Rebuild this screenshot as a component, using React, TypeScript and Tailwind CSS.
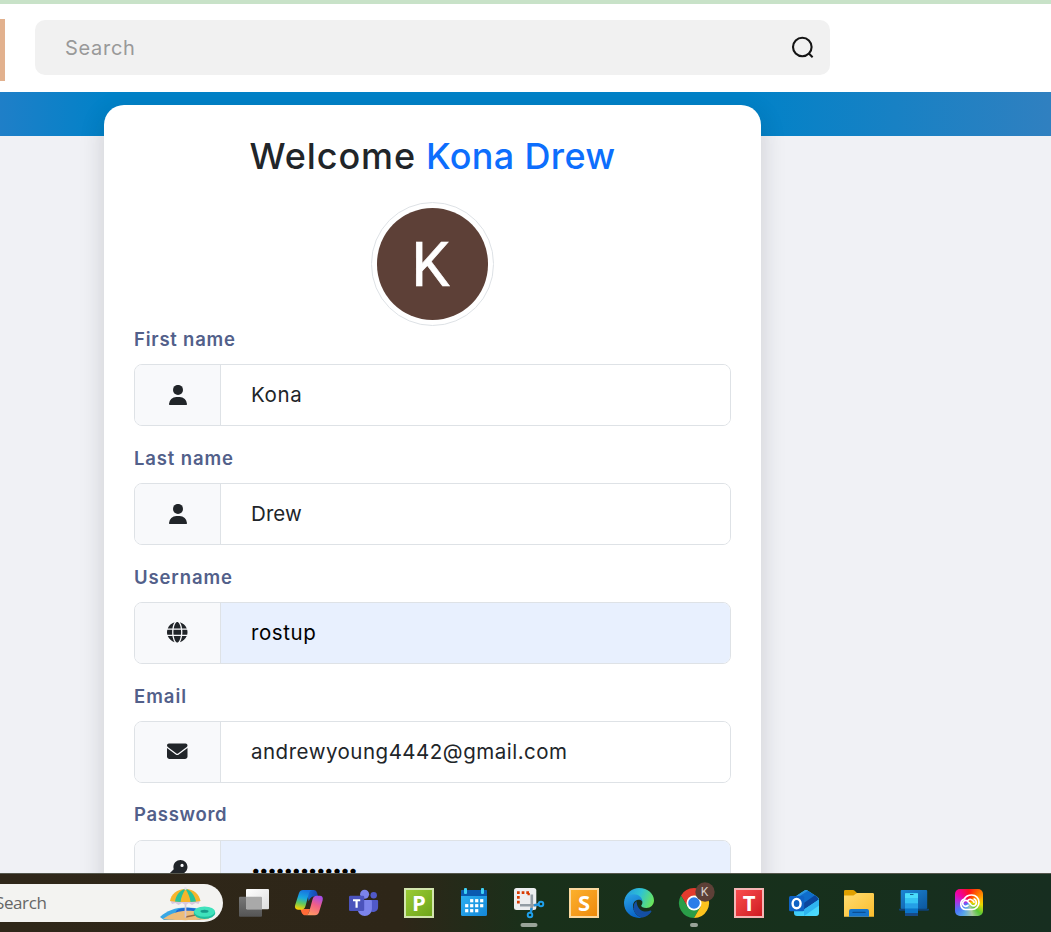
import type { ReactNode } from 'react';
import { FaGlobe, FaEnvelope, FaKey } from 'react-icons/fa6';

type FieldProps = {
  label: string;
  labelClass: string;
  value: string;
  valueClass: string;
  icon: ReactNode;
  filled?: boolean;
};

function Field({ label, labelClass, value, valueClass, icon, filled }: FieldProps) {
  return (
    <div className="flex h-[119px] shrink-0 flex-col">
      <div className={`flex h-[38px] items-start text-[18.500px] leading-[27px] font-semibold text-[#52608a] ${labelClass}`}>
        <span className="whitespace-nowrap">{label}</span>
      </div>
      <div className="flex h-[62px] overflow-hidden rounded-[8px] border border-[#dee2e6]">
        <div className="flex w-[86px] items-center justify-center border-r border-[#dee2e6] bg-[#f8f9fb] pb-px text-[20.500px] text-[#212529]">
          {icon}
        </div>
        <div className={`flex flex-1 items-center pl-[30px] whitespace-nowrap ${filled ? 'bg-[#e8f0fe] text-black' : 'bg-white text-[#212529]'} ${valueClass}`}>
          {value}
        </div>
      </div>
    </div>
  );
}

function UserIcon() {
  return (
    <svg viewBox="0 0 20 20" className="size-[20px]" fill="currentColor">
      <circle cx="10" cy="4.900" r="5" />
      <path d="M1 19A7.400 7.400 0 0 1 8.400 11.900h3.200A7.400 7.400 0 0 1 19 19q0 1.200-1.200 1.200H2.200Q1 20.200 1 19z" />
    </svg>
  );
}

function AppCell({ children, indicator }: { children: ReactNode; indicator?: string }) {
  return (
    <div className="relative flex h-full w-[55px] shrink-0 items-center justify-center">
      {children}
      {indicator && <div className={`absolute bottom-[5px] left-1/2 h-[4px] -translate-x-1/2 rounded-full bg-[#99a398] ${indicator}`} />}
    </div>
  );
}

function LetterTile({ letter, tone }: { letter: string; tone: string }) {
  return (
    <div className={`flex size-[30px] items-center justify-center border-2 bg-linear-to-br font-['Open_Sans',sans-serif] text-[22px] leading-none font-bold text-white ${tone}`}>
      <span className="-translate-y-px">{letter}</span>
    </div>
  );
}

const svg = 'size-[30px] overflow-visible';

function TaskViewIcon() {
  return (
    <svg viewBox="0 0 30 30" className={svg}>
      <defs>
        <linearGradient id="tv1" x1="0" y1="0" x2="1" y2="1"><stop stopColor="#fff" /><stop offset="1" stopColor="#dedede" /></linearGradient>
        <linearGradient id="tv2" x1="0" y1="0" x2="0" y2="1"><stop stopColor="#777" /><stop offset="1" stopColor="#555" /></linearGradient>
      </defs>
      <rect x="0" y="8.7" width="23" height="20" rx="1" fill="url(#tv2)" />
      <rect x="7" y="1" width="23" height="20.3" rx="1" fill="url(#tv1)" />
      <path d="M7 8.7h15a1 1 0 0 1 1 1v11.6H8a1 1 0 0 1-1-1z" fill="#a9a9a9" />
    </svg>
  );
}

function CopilotIcon() {
  return (
    <svg viewBox="0 0 30 30" className={svg}>
      <defs>
        <linearGradient id="cp1" x1="0.5" y1="0" x2="0.3" y2="1"><stop stopColor="#1873e0" /><stop offset=".4" stopColor="#19a8df" /><stop offset=".68" stopColor="#63c85c" /><stop offset="1" stopColor="#ffd000" /></linearGradient>
        <linearGradient id="cp2" x1="0.7" y1="0" x2="0.3" y2="1"><stop stopColor="#a64de8" /><stop offset=".45" stopColor="#f25f86" /><stop offset="1" stopColor="#ff9b62" /></linearGradient>
        <linearGradient id="cp3" x1="0" y1="0" x2="1" y2="0"><stop stopColor="#1570d8" /><stop offset="1" stopColor="#1a42ad" /></linearGradient>
      </defs>
      <path d="M13 2h6.500c2 0 3 1 3.600 3l1 3.500h-4c-3 0-4.500 2-5.500 5z" fill="url(#cp3)" />
      <path d="M6.500 21h9.500l-1 3c-.6 2-1.500 3.300-3.500 3.300C8.500 27.300 7.500 25 6.500 21z" fill="#ff6a37" />
      <path d="M9 2h9.500c-2 0-3 1.600-3.600 3.500L11.500 18c-.8 2.500-2 3.700-4 3.700H4C1.500 21.700.4 19.500 1.200 17L5 5c.7-2 2-3 4-3z" fill="url(#cp1)" />
      <path d="M21 27.300h-9.500c2 0 3-1.400 3.600-3.300L18.500 11.500c.8-2.500 2-3.700 4-3.700h3.200c2.600 0 3.700 2 2.900 4.700L25 24.300c-.7 2-2 3-4 3z" fill="url(#cp2)" />
    </svg>
  );
}

function TeamsIcon() {
  return (
    <svg viewBox="0 0 30 30" className={svg}>
      <circle cx="24.700" cy="7.300" r="3.200" fill="#5059c9" />
      <path d="M20 12h8.200a.9.900 0 0 1 .9.900V19a5 5 0 0 1-9 3z" fill="#5059c9" />
      <circle cx="15.600" cy="6.300" r="4.500" fill="#7b83eb" />
      <path d="M8.700 12h13.200a1 1 0 0 1 1 1v8a7.100 7.100 0 0 1-14.200 0z" fill="#7b83eb" />
      <rect x="0" y="7.700" width="15.200" height="15.300" rx="1.300" fill="#4b53bc" />
      <path d="M4 11.300h7.200v1.900H8.700v6.500H6.500v-6.500H4z" fill="#fff" />
    </svg>
  );
}

function CalendarIcon() {
  const dots = [[12.700, 12.700], [17.700, 12.700], [22.700, 12.700], [7.700, 17.700], [12.700, 17.700], [17.700, 17.700], [22.700, 17.700], [7.700, 22.700], [12.700, 22.700], [17.700, 22.700]];
  return (
    <svg viewBox="0 0 30 30" className={svg}>
      <defs><linearGradient id="cal" x1="0" y1="0" x2="1" y2="1"><stop stopColor="#2fb4f4" /><stop offset="1" stopColor="#1487d8" /></linearGradient></defs>
      <rect x="2" y="2" width="26" height="26" rx="1.500" fill="url(#cal)" />
      <path d="M2 8V3.500A1.500 1.500 0 0 1 3.500 2h23A1.500 1.500 0 0 1 28 3.500V8z" fill="#0a5ab0" />
      <rect x="5" y="0" width="3" height="6" rx="1" fill="#3fd0f6" />
      <rect x="22" y="0" width="3" height="6" rx="1" fill="#3fd0f6" />
      {dots.map(([x, y]) => <rect key={`${x}-${y}`} x={x - 1.600} y={y - 1.600} width="3.200" height="3.200" fill="#fff" />)}
    </svg>
  );
}

function SnippingIcon() {
  return (
    <svg viewBox="0 0 30 30" className={svg}>
      <rect width="22.300" height="22" rx="2.500" fill="#eceef0" />
      <path d="M3 3.200h2.700v2.700H3zM7.700 3.200h2.700v2.700H7.700zM12.300 3.200H15v2.700h-2.700zM3 8h2.700v2.700H3zM3 12.800h2.700v2.700H3zM13.500 5h2.300v2.300h-2.300z" fill="#d83b01" />
      <path d="M17.800 6.500V18l-.6 5M6 17.300h13.500l5-.7" fill="none" stroke="#929ca4" strokeWidth="2.600" />
      <path d="m20 17.300 5-1M17.600 20l-.9 5" stroke="#1d8fdb" strokeWidth="2.200" />
      <circle cx="27" cy="16" r="2.300" fill="none" stroke="#1fa0ec" strokeWidth="1.900" />
      <circle cx="16" cy="27" r="2.300" fill="none" stroke="#1fa0ec" strokeWidth="1.900" />
    </svg>
  );
}

function EdgeIcon() {
  return (
    <svg viewBox="0 0 30 30" className={svg}>
      <defs>
        <linearGradient id="ed1" x1="0" y1=".3" x2="1" y2=".6"><stop stopColor="#2499e0" /><stop offset=".5" stopColor="#2fc3d3" /><stop offset="1" stopColor="#6be55a" /></linearGradient>
        <linearGradient id="ed2" x1="0" y1="0" x2=".3" y2="1"><stop stopColor="#2aa5e5" /><stop offset="1" stopColor="#0a66c9" /></linearGradient>
      </defs>
      <path d="M.4 12C2 5 8 0 15 0c9 0 15 6 15 12.500 0 4.500-3.500 7.500-7.500 7.500-3.500 0-5.300-1.300-5.300-2.200 0-.8 1.200-1.200 1.200-3.400C18.400 10.500 14.500 8 10 8 5.500 8 2 10 .4 12z" fill="url(#ed1)" />
      <path d="M0 15c0-5.500 4.500-8.800 9.800-8.800 5 0 8.600 3.500 8.600 7.400-1-1.600-2.600-2.200-4.400-1.800C9.500 12.500 8 17 9.500 21.500 11 26 14.500 29 18.500 29.600 8.500 31.500 0 24.500 0 15z" fill="url(#ed2)" />
      <path d="M12.500 13c-3.600 3-3.800 8.200-.8 11.500 3.800 4.200 11 4 15.400-.6.700-.7.100-1.700-.8-1.300-5.800 2.600-13.300.1-13.800-9.600z" fill="#144fa3" />
      <path d="M9.200 20.500c1.300 5 5 8.700 9.500 9 3.600-.7 6.600-2.800 8.700-6-5 3.800-14.500 3.500-15.800-4.800z" fill="#144fa3" />
    </svg>
  );
}

function ChromeIcon() {
  return (
    <svg viewBox="0 0 30 30" className={svg}>
      <path d="M15 7.500H28A15 15 0 0 0 2 7.500l6.500 11.300z" fill="#e33b2e" />
      <path d="M8.500 18.800 2 7.500A15 15 0 0 0 15 30l6.500-11.200z" fill="#2a9d48" />
      <path d="M21.500 18.800 15 30A15 15 0 0 0 28 7.500H15z" fill="#fcc31e" />
      <circle cx="15" cy="15" r="7.500" fill="#fff" />
      <circle cx="15" cy="15" r="5.800" fill="#2b7de9" />
      <circle cx="26" cy="4" r="9.700" fill="#5d4037" />
      <text x="25.600" y="8.300" textAnchor="middle" fontSize="12" fontFamily="Roboto, sans-serif" fill="#d9cfcb">K</text>
    </svg>
  );
}

function OutlookIcon() {
  return (
    <svg viewBox="0 0 30 30" className={svg}>
      <defs>
        <linearGradient id="ol1" x1="0" y1="0" x2="1" y2="1"><stop stopColor="#2ab2f0" /><stop offset="1" stopColor="#4fe0ff" /></linearGradient>
        <clipPath id="olc"><path d="M5 9.500 15.500 2.500q1.500-.9 3 0L28.500 9q1.500 1 1.500 2.500V25q0 3-3 3H8q-3 0-3-3z" /></clipPath>
      </defs>
      <g clipPath="url(#olc)">
        <path d="M0 0h30v30H0z" fill="url(#ol1)" />
        <path d="M0 0h24L5 14z" fill="#2a93e0" />
        <path d="m4 12 18-11 6 6-14 10z" fill="#0f6dcb" />
        <path d="m12 17 15-10.500 3 5L15 21.500z" fill="#0b459c" />
        <path d="m15 21.500 15-10v6L15 28z" fill="#2fb4f0" />
      </g>
      <rect x="0" y="8" width="15.200" height="15.200" rx="1.500" fill="#0f62c4" />
      <ellipse cx="7.600" cy="15.600" rx="4" ry="4.700" fill="none" stroke="#fff" strokeWidth="2.400" />
    </svg>
  );
}

function FolderIcon() {
  return (
    <svg viewBox="0 0 30 30" className={svg}>
      <defs><linearGradient id="fo" x1="0" y1="0" x2="1" y2="1"><stop stopColor="#ffdc71" /><stop offset="1" stopColor="#fbbd2d" /></linearGradient></defs>
      <path d="M0 3.300Q0 2 1.300 2H9q1 0 1.700.8L13 5v6H0z" fill="#dfa000" />
      <path d="M0 7.500h9.500L13 5h15.700Q30 5 30 6.300v22.400H0z" fill="url(#fo)" />
      <path d="M5 28.700V23q0-2 2-2h16q2 0 2 2v5.700z" fill="#1575cc" />
      <path d="M9 24.400h12" stroke="#0b4f94" strokeWidth="1.300" strokeLinecap="round" />
    </svg>
  );
}

function PhoneLinkIcon() {
  return (
    <svg viewBox="0 0 30 30" className={svg}>
      <defs><linearGradient id="pl" x1="0" y1="0" x2="1" y2="1"><stop stopColor="#1d86d4" /><stop offset="1" stopColor="#0c569e" /></linearGradient></defs>
      <rect x="1.700" y="2" width="26.500" height="19" rx="1" fill="url(#pl)" />
      <path d="M0 20.700h30v.8q0 1.200-1.200 1.200H1.200Q0 22.700 0 21.500z" fill="#0e4379" />
      <rect x="6" y="5" width="13" height="23" rx="1" fill="#36c5f4" />
      <path d="M6 5.500h13V10H6z" fill="#4bdcfb" />
      <path d="M6 15.300h13v5H6z" fill="#259fe6" />
      <path d="M6 20.300h13v4.800H6z" fill="#0b75c9" />
      <path d="M6 25h13v3H6z" fill="#174b88" />
      <path d="M11 6.500h3.500" stroke="#176392" strokeWidth="1" />
    </svg>
  );
}

function CreativeCloudIcon() {
  return (
    <div className="flex h-[27px] w-[27.500px] -translate-y-px items-center justify-center rounded-[5px] bg-[conic-gradient(from_0deg,#ff1020,#ff5a00_35deg,#ffb000_75deg,#e8d800_100deg,#58c838_135deg,#a8c8a0_165deg,#58a8e8_205deg,#4c78fa_235deg,#b030e0_275deg,#f000a0_310deg,#ff1020)]">
      <svg viewBox="0 0 22 17" className="h-[17px] w-[22px]" fill="none" stroke="#fff" strokeWidth="1.700" strokeLinecap="round">
        <path d="M14 15.500H7.200A5.500 5.500 0 0 1 6.300 5C7.600 2.600 10.500 1 13.700 1c4.200 0 7.300 3.200 7.300 7.200s-3.100 7.300-7 7.300z" />
        <path d="M16 8.200c-1.600-3.200-5-3.600-6.500-1.200M5.500 7.300c1.700-1.400 3.500-.9 4.800.5l3 3.200c1.200 1.200 3 1.300 4.100 0 1.600-1.900 1-5-1.200-6M5.500 7.300c-1.600 1.700-.9 4.700 1.700 5 1.200.1 2-.3 2.800-1" />
      </svg>
    </div>
  );
}

function BeachIcon() {
  return (
    <svg viewBox="0 0 56 34" className="h-[34px] w-[56px] overflow-visible">
      <path d="M0 31C8 23 20 20 35 22l13 5-8 7H4z" fill="#39a7e5" />
      <path d="M17 24c6-3 16-3 25 1l-5 7H12z" fill="#1e69d5" />
      <path d="M3 33c9-7 20-9 30-8 8 1 14 4 16 8-10 1.500-38 1.500-46 0z" fill="#edbc7a" />
      <path d="m25.500 31 10-2" stroke="#9b6844" strokeWidth="1.500" />
      <path d="M25.500 4v27" stroke="#d2c6d5" strokeWidth="1.700" strokeLinecap="round" />
      <ellipse cx="44.500" cy="27" rx="10.800" ry="6" fill="#20bc9d" />
      <ellipse cx="44.500" cy="25.600" rx="10.500" ry="5.200" fill="#40e2bc" />
      <ellipse cx="44.500" cy="25.200" rx="4" ry="1.500" fill="#179b8b" />
      <path d="M10 14 12 18l3.500-1 3 2 3.500-2 3.500 2 3.500-2 3 2 3.500-2 3 1 2-4z" fill="#d8c8df" />
      <path d="M10 15C11 8 17 3 25.500 3S39 8 40.500 15l-5 .7-5 .3h-10l-5-.3z" fill="#f6b52c" />
      <path d="M15 15.500C16 9 20 4 25.500 3 23 7 21 11 20.500 16zM30.500 16C30 11 28 7 25.500 3 31 4 34.500 9 36 15.500z" fill="#28c29a" />
      <circle cx="25.500" cy="2.600" r="1.300" fill="#e6e0ea" />
    </svg>
  );
}

export default function App() {
  return (
    <div className="flex h-[932px] w-[1051px] flex-col overflow-hidden bg-[#f0f1f5] font-['Inter',sans-serif]">
      <div className="h-[4px] shrink-0 bg-[#c8e2c8]" />
      <header className="flex h-[88px] shrink-0 items-start bg-white pt-[15px]">
        <div className="h-[62px] w-[5px] bg-[#e2b18e]" />
        <div className="mt-px ml-[30px] flex h-[55px] w-[795px] items-center justify-between rounded-[10px] bg-[#f1f1f1] pr-[15px] pl-[30px]">
          <span className="text-[20px] tracking-[0.7px] text-[#999]">Search</span>
          <svg viewBox="0 0 24 24" className="size-[24px]" fill="none" stroke="#141414" strokeWidth="2.100">
            <circle cx="11.300" cy="11" r="9.300" />
            <path d="m17.600 17.300 4 4" />
          </svg>
        </div>
      </header>

      <main className="flex min-h-0 flex-1 items-start overflow-hidden bg-[linear-gradient(90deg,#1f7fc8_0px,#0082c8_110px,#0082c8_740px,#3080c0_1051px)] bg-[length:100%_44px] bg-no-repeat pt-[13px] pl-[104px]">
        <section className="flex w-[657px] shrink-0 flex-col rounded-[20px] bg-white px-[30px] pt-[24px] pb-[60px] shadow-[0_8px_24px_rgba(30,30,40,0.17)]">
          <h1 className="flex h-[54px] items-center justify-center gap-[10px] text-[36px] font-medium whitespace-nowrap text-[#212529]">
            <span className="tracking-[0.9px]">Welcome</span>
            <span className="tracking-[0.35px] text-[#0d6efd]">Kona Drew</span>
          </h1>
          <div className="mt-[19px] flex h-[124px] w-[123px] items-center justify-center self-center rounded-full border border-[#dee2e6]">
            <div className="flex h-[112px] w-[111px] items-center justify-center rounded-full bg-[#5d4037] pt-[3px] pr-[4px] font-['Roboto',sans-serif] text-[61px] leading-none text-white [-webkit-text-stroke:0.6px_white]">K</div>
          </div>
          <div className="flex flex-col">
            <Field label="First name" labelClass="tracking-[0.780px]" value="Kona" valueClass="text-[20.500px] tracking-[0.6px]" icon={<UserIcon />} />
            <Field label="Last name" labelClass="tracking-[0.870px]" value="Drew" valueClass="text-[20.500px] tracking-[0.100px]" icon={<UserIcon />} />
            <Field label="Username" labelClass="tracking-[0.880px]" value="rostup" valueClass="text-[20.500px] tracking-[0.6px]" icon={<FaGlobe />} filled />
            <Field label="Email" labelClass="tracking-[1px]" value="andrewyoung4442@gmail.com" valueClass="text-[20.500px] tracking-[0.5px]" icon={<FaEnvelope />} />
            <Field label="Password" labelClass="-mt-px mb-px tracking-[0.7px]" value="•••••••••••••" valueClass="text-[17px] tracking-[-1.450px]" icon={<FaKey />} filled />
          </div>
        </section>
      </main>

      <footer className="flex h-[59px] shrink-0 items-center border-t border-[#55574d] bg-[linear-gradient(90deg,#2f2719_0px,#2e2618_400px,#19301a_530px,#17301c_800px,#172e20_1051px)]">
        <div className="mr-[3.500px] flex h-[38px] w-[223px] shrink-0 items-center justify-between rounded-r-full bg-[#f3f3f1] pr-[7px]">
          <span className="-ml-[5px] font-['Open_Sans',sans-serif] text-[17px] tracking-[-0.4px] text-[#666]">Search</span>
          <BeachIcon />
        </div>
        <AppCell><TaskViewIcon /></AppCell>
        <AppCell><CopilotIcon /></AppCell>
        <AppCell><TeamsIcon /></AppCell>
        <AppCell><LetterTile letter="P" tone="border-[#d3e5ae] from-[#9acb34] to-[#6ea51a]" /></AppCell>
        <AppCell><CalendarIcon /></AppCell>
        <AppCell indicator="w-[17px]"><SnippingIcon /></AppCell>
        <AppCell><LetterTile letter="S" tone="border-[#fbd9a0] from-[#fcb02c] to-[#ee8a08]" /></AppCell>
        <AppCell><EdgeIcon /></AppCell>
        <AppCell indicator="w-[8px]"><ChromeIcon /></AppCell>
        <AppCell><LetterTile letter="T" tone="border-[#f5b5b5] from-[#fa4b4e] to-[#cf1820]" /></AppCell>
        <AppCell><OutlookIcon /></AppCell>
        <AppCell><FolderIcon /></AppCell>
        <AppCell><PhoneLinkIcon /></AppCell>
        <AppCell><CreativeCloudIcon /></AppCell>
      </footer>
    </div>
  );
}
